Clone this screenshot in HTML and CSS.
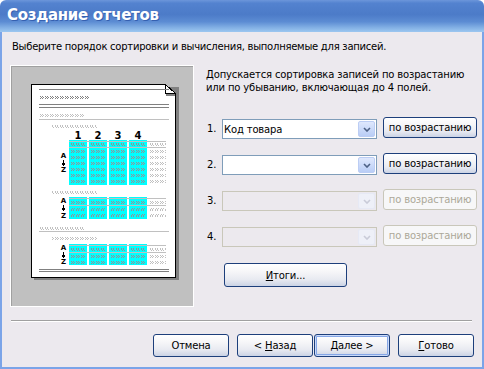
FILE: index.html
```html
<!DOCTYPE html>
<html lang="ru">
<head>
    <meta charset="UTF-8">
    <title>Создание отчетов</title>
    <link rel="stylesheet" href="styles.css">
</head>
<body>
    <div class="window">
        <div class="titlebar">Создание отчетов</div>
        <div class="dialog">
            <p class="intro">Выберите порядок сортировки и вычисления, выполняемые для записей.</p>

            <div class="main">
                <div class="preview">
                    <svg class="paper" width="182" height="240" viewBox="11 66 182 240">
                        <defs>
                            <pattern id="dk" width="5" height="3" patternUnits="userSpaceOnUse">
                                <path d="M0 0h1v1H0zM2 0h1v1H2zM1 1h1v1H1zM3 1h1v1H3zM0 2h1v1H0zM2 2h1v1H2z" fill="#808080"/>
                            </pattern>
                            <pattern id="lt" width="5" height="3" patternUnits="userSpaceOnUse">
                                <path d="M0 0h1v1H0zM2 0h1v1H2zM1 1h1v1H1zM3 1h1v1H3zM0 2h1v1H0zM2 2h1v1H2z" fill="#c0c0c0"/>
                            </pattern>
                            <pattern id="cl" x="69" width="20" height="3" patternUnits="userSpaceOnUse">
                                <path d="M2 0h1v1H2zM4 0h1v1H4zM7 0h1v1H7zM9 0h1v1H9zM12 0h1v1h-1zM14 0h1v1h-1zM3 1h1v1H3zM5 1h1v1H5zM8 1h1v1H8zM10 1h1v1h-1zM13 1h1v1h-1zM15 1h1v1h-1zM2 2h1v1H2zM4 2h1v1H4zM7 2h1v1H7zM9 2h1v1H9zM12 2h1v1h-1zM14 2h1v1h-1z" fill="#9c8c90"/>
                            </pattern>
                        </defs>

                        <!-- sheet with shadow and folded corner -->
                        <rect x="34" y="87" width="145" height="193" fill="#808080"/>
                        <path d="M31.5 84.5H165.5L175.5 94.5V277.5H31.5Z" fill="#fff" stroke="#000"/>
                        <rect x="166" y="94" width="9" height="2" fill="#808080"/>
                        <path d="M165.5 84.5V93.5H175.5Z" fill="#fff" stroke="#000"/>

                        <!-- report header -->
                        <rect x="39" y="89" width="130" height="1" fill="#808080"/>
                        <rect x="39" y="96" width="50" height="3" fill="url(#dk)"/>
                        <rect x="39" y="104" width="130" height="1" fill="#808080"/>
                        <rect x="39" y="107" width="130" height="1" fill="#808080"/>

                        <rect x="39" y="114" width="45" height="3" fill="url(#lt)"/>
                        <rect x="39" y="119" width="130" height="1" fill="#c0c0c0"/>
                        <rect x="52" y="125" width="45" height="3" fill="url(#lt)"/>

                        <g class="nums">
                            <text x="78" y="139">1</text>
                            <text x="98" y="139">2</text>
                            <text x="118" y="139">3</text>
                            <text x="138" y="139">4</text>
                        </g>

                        <!-- group 1 -->
                        <g fill="#00ffff">
                            <rect x="69" y="140" width="18" height="45"/>
                            <rect x="89" y="140" width="18" height="45"/>
                            <rect x="109" y="140" width="18" height="45"/>
                            <rect x="129" y="140" width="18" height="45"/>
                        </g>
                        <rect x="69" y="141" width="97" height="1" fill="#c0c0c0"/>
                        <rect x="69" y="147" width="97" height="1" fill="#c0c0c0"/>
                        <g>
                            <rect x="69" y="143" width="80" height="3" fill="url(#cl)"/>
                            <rect x="69" y="150" width="80" height="3" fill="url(#cl)"/>
                            <rect x="69" y="156" width="80" height="3" fill="url(#cl)"/>
                            <rect x="69" y="162" width="80" height="3" fill="url(#cl)"/>
                            <rect x="69" y="168" width="80" height="3" fill="url(#cl)"/>
                            <rect x="69" y="174" width="80" height="3" fill="url(#cl)"/>
                            <rect x="69" y="180" width="80" height="3" fill="url(#cl)"/>
                            <rect x="150" y="143" width="16" height="3" fill="url(#lt)"/>
                            <rect x="150" y="150" width="16" height="3" fill="url(#lt)"/>
                            <rect x="150" y="156" width="16" height="3" fill="url(#lt)"/>
                            <rect x="150" y="162" width="16" height="3" fill="url(#lt)"/>
                            <rect x="150" y="168" width="16" height="3" fill="url(#lt)"/>
                            <rect x="150" y="174" width="16" height="3" fill="url(#lt)"/>
                            <rect x="150" y="180" width="16" height="3" fill="url(#lt)"/>
                        </g>
                        <g class="az">
                            <text x="63.5" y="158">A</text>
                            <path d="M63.5 160V165M62 163.5L63.5 165.5L65 163.5"/>
                            <text x="63.5" y="172">Z</text>
                        </g>

                        <!-- group 2 -->
                        <rect x="52" y="191" width="45" height="3" fill="url(#lt)"/>
                        <g fill="#00ffff">
                            <rect x="69" y="197" width="18" height="22"/>
                            <rect x="89" y="197" width="18" height="22"/>
                            <rect x="109" y="197" width="18" height="22"/>
                            <rect x="129" y="197" width="18" height="22"/>
                        </g>
                        <rect x="69" y="198" width="97" height="1" fill="#c0c0c0"/>
                        <rect x="69" y="205" width="97" height="1" fill="#c0c0c0"/>
                        <rect x="69" y="201" width="80" height="3" fill="url(#cl)"/>
                        <rect x="69" y="208" width="80" height="3" fill="url(#cl)"/>
                        <rect x="69" y="214" width="80" height="3" fill="url(#cl)"/>
                        <rect x="150" y="201" width="16" height="3" fill="url(#lt)"/>
                        <rect x="150" y="208" width="16" height="3" fill="url(#lt)"/>
                        <rect x="150" y="214" width="16" height="3" fill="url(#lt)"/>
                        <g class="az">
                            <text x="63.5" y="203">A</text>
                            <path d="M63.5 205V210M62 208.5L63.5 210.5L65 208.5"/>
                            <text x="63.5" y="218">Z</text>
                        </g>

                        <rect x="39" y="227" width="45" height="3" fill="url(#lt)"/>
                        <rect x="39" y="231" width="130" height="1" fill="#c0c0c0"/>
                        <rect x="52" y="237" width="45" height="3" fill="url(#lt)"/>

                        <!-- group 3 -->
                        <g fill="#00ffff">
                            <rect x="69" y="244" width="18" height="21"/>
                            <rect x="89" y="244" width="18" height="21"/>
                            <rect x="109" y="244" width="18" height="21"/>
                            <rect x="129" y="244" width="18" height="21"/>
                        </g>
                        <rect x="69" y="245" width="97" height="1" fill="#c0c0c0"/>
                        <rect x="69" y="252" width="97" height="1" fill="#c0c0c0"/>
                        <rect x="69" y="248" width="80" height="3" fill="url(#cl)"/>
                        <rect x="69" y="255" width="80" height="3" fill="url(#cl)"/>
                        <rect x="69" y="261" width="80" height="3" fill="url(#cl)"/>
                        <rect x="150" y="248" width="16" height="3" fill="url(#lt)"/>
                        <rect x="150" y="255" width="16" height="3" fill="url(#lt)"/>
                        <rect x="150" y="261" width="16" height="3" fill="url(#lt)"/>
                        <g class="az">
                            <text x="63.5" y="250">A</text>
                            <path d="M63.5 252V257M62 255.5L63.5 257.5L65 255.5"/>
                            <text x="63.5" y="264">Z</text>
                        </g>

                        <rect x="39" y="269" width="130" height="1" fill="#808080"/>
                        <rect x="39" y="271" width="130" height="1" fill="#808080"/>
                    </svg>
                </div>

                <div class="options">
                    <p class="hint">Допускается сортировка записей по возрастанию<br>или по убыванию, включающая до 4 полей.</p>

                    <div class="sort-row">
                        <span class="num">1.</span>
                        <div class="combo">
                            <span class="value">Код товара</span>
                            <span class="drop"><svg width="8" height="5" viewBox="0 0 8 5"><path d="M1 1L4 4L7 1"/></svg></span>
                        </div>
                        <button class="btn order">по возрастанию</button>
                    </div>
                    <div class="sort-row">
                        <span class="num">2.</span>
                        <div class="combo">
                            <span class="value"></span>
                            <span class="drop"><svg width="8" height="5" viewBox="0 0 8 5"><path d="M1 1L4 4L7 1"/></svg></span>
                        </div>
                        <button class="btn order">по возрастанию</button>
                    </div>
                    <div class="sort-row off">
                        <span class="num">3.</span>
                        <div class="combo">
                            <span class="value"></span>
                            <span class="drop"><svg width="8" height="5" viewBox="0 0 8 5"><path d="M1 1L4 4L7 1"/></svg></span>
                        </div>
                        <button class="btn order" disabled>по возрастанию</button>
                    </div>
                    <div class="sort-row off">
                        <span class="num">4.</span>
                        <div class="combo">
                            <span class="value"></span>
                            <span class="drop"><svg width="8" height="5" viewBox="0 0 8 5"><path d="M1 1L4 4L7 1"/></svg></span>
                        </div>
                        <button class="btn order" disabled>по возрастанию</button>
                    </div>

                    <button class="btn totals"><u>И</u>тоги...</button>
                </div>
            </div>

            <div class="separator"></div>

            <div class="footer">
                <button class="btn">Отмена</button>
                <button class="btn back">&lt; <u>Н</u>азад</button>
                <button class="btn next default"><u>Д</u>алее &gt;</button>
                <button class="btn done"><u>Г</u>отово</button>
            </div>
        </div>
    </div>
</body>
</html>
```

FILE: styles.css
```css
body {
    margin: 0;
    font-family: "DejaVu Sans", Tahoma, sans-serif;
    font-size: 10px;
    letter-spacing: -0.15px;
    color: #000;
    background: #fff;
}
.window {
    width: 484px;
    height: 369px;
    display: flex;
    flex-direction: column;
}
.titlebar {
    height: 32px;
    line-height: 31px;
    padding-left: 7px;
    color: #fff;
    font-size: 15px;
    font-weight: bold;
    letter-spacing: -0.3px;
    text-shadow: 1px 1px 0 #3560b0;
    background: linear-gradient(#6c96da 0, #5382cf 10%, #4c7bc8 45%, #5c8cd3 68%, #86b3e6 88%, #9cc7f0 100%);
    border-radius: 6px 6px 0 0;
}
.dialog {
    flex: 1;
    background: #ece9ee;
    border: 2px solid #7ba4e8;
    border-top: 0;
}
.intro {
    margin: 8px 0 0 10px;
    line-height: 13px;
    letter-spacing: -0.25px;
}
.main {
    display: flex;
    margin: 12px 0 0 8px;
    height: 242px;
}
.preview {
    width: 184px;
    height: 242px;
    box-sizing: border-box;
    border: 1px solid #fff;
    box-shadow: inset 1px 1px 0 #a0a0a0;
    background: #c0c0c0;
}
.paper {
    display: block;
    shape-rendering: crispEdges;
}
.paper .nums text {
    font-family: "DejaVu Sans", sans-serif;
    font-size: 10px;
    font-weight: bold;
    text-anchor: middle;
}
.paper .az text {
    font-family: "DejaVu Sans", sans-serif;
    font-size: 7px;
    font-weight: bold;
    text-anchor: middle;
}
.paper .az path {
    fill: none;
    stroke: #000;
}
.options {
    margin-left: 12px;
}
.hint {
    margin: 3px 0 25px;
    line-height: 13px;
}
.sort-row {
    display: flex;
    align-items: flex-start;
    height: 20px;
    margin-bottom: 16px;
}
.num {
    width: 15px;
    padding-left: 1px;
    line-height: 20px;
}
.combo {
    width: 155px;
    height: 20px;
    box-sizing: border-box;
    border: 1px solid #7f9db9;
    background: #fff;
    display: flex;
    align-items: center;
    justify-content: space-between;
    padding-left: 1px;
}
.drop {
    width: 17px;
    height: 16px;
    margin-right: 1px;
    box-sizing: border-box;
    border: 1px solid #bccdf4;
    border-radius: 2px;
    background: linear-gradient(#dfe8fd, #b9cdf6);
    display: flex;
    align-items: center;
    justify-content: center;
}
.drop path {
    fill: none;
    stroke: #4d6185;
    stroke-width: 1.6;
}
.off .combo {
    border-color: #c9c7ba;
    background: #ece9ee;
}
.off .drop {
    border-color: #e6e9f5;
    background: #eef0f8;
}
.off .drop path {
    stroke: #c9cbd8;
}
.btn {
    font: inherit;
    letter-spacing: inherit;
    color: #000;
    height: 23px;
    width: 76px;
    padding: 0;
    border: 1px solid #1d3f7b;
    border-radius: 3px;
    background: linear-gradient(#ffffff, #f6f6f8 35%, #e8eaf1 70%, #cbd3e5);
}
.btn u {
    text-decoration: underline;
}
.btn:disabled {
    color: #aca899;
    border-color: #c9c7ba;
    background: #f7f7f8;
}
.order {
    width: 94px;
    height: 21px;
    margin: -2px 0 0 6px;
}
.totals {
    width: 123px;
    height: 24px;
    margin-left: 18px;
}
.default {
    box-shadow: inset 0 0 0 1px #cadaf9, inset 0 0 0 2px #85a6e6;
}
.separator {
    margin: 13px 0 0 9px;
    width: 461px;
    height: 1px;
    background: #a0a0a0;
    border-bottom: 1px solid #fff;
}
.footer {
    display: flex;
    justify-content: flex-end;
    margin-top: 12px;
    padding-right: 8px;
}
.back {
    margin-left: 8px;
}
.next {
    margin-left: 1px;
}
.done {
    margin-left: 8px;
}
```
